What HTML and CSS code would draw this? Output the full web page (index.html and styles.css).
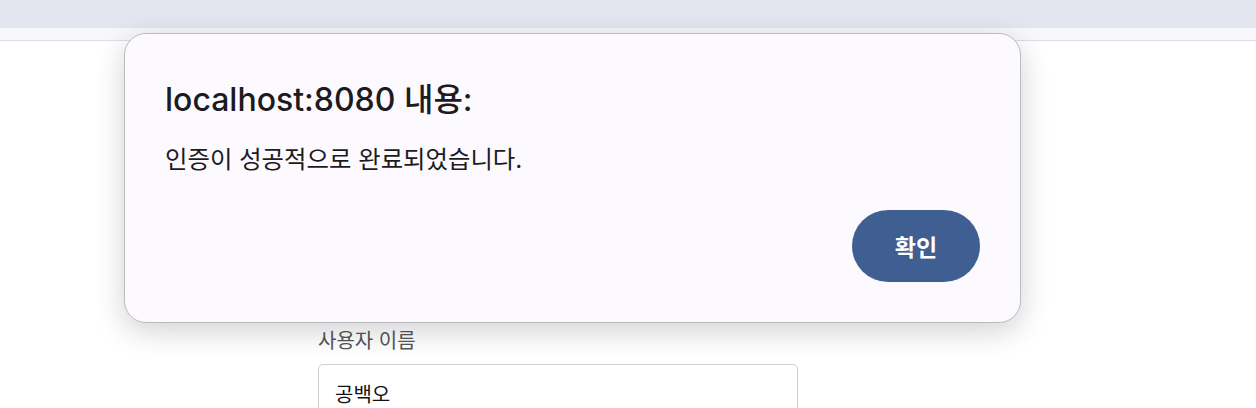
FILE: index.html
```html
<!DOCTYPE html>
<html lang="ko">
<head>
	<meta charset="utf-8">
	<title>회원 정보</title>
	<link rel="stylesheet" href="styles.css">
</head>
<body>
	<div class="topbar"></div>
	<div class="toolbar"></div>
	<div class="page">
		<form class="form">
			<label class="label" for="username">사용자 이름</label>
			<input class="field" id="username" type="text" value="공백오">
		</form>
	</div>

	<div class="alert">
		<div class="alert-title">localhost:8080 내용:</div>
		<div class="alert-msg">인증이 성공적으로 완료되었습니다.</div>
		<div class="alert-actions">
			<button class="alert-ok" type="button">확인</button>
		</div>
	</div>
</body>
</html>
```
FILE: styles.css
```css
html, body {
	margin: 0;
	padding: 0;
	background: #fff;
	font-family: "Inter", "Noto Sans CJK KR", sans-serif;
	height: 408px;
	overflow: hidden;
}
div.topbar {
	height: 28px;
	background: #e3e6ef;
}
div.toolbar {
	height: 12px;
	background: #f8f7fc;
	border-bottom: 1px solid #dcdde6;
}
div.page {
	padding: 287px 0 0 318px;
}
form.form {
	width: 480px;
	display: flex;
	flex-direction: column;
}
label.label {
	font-size: 20px;
	color: #555;
	line-height: 26px;
	margin-bottom: 10px;
}
input.field {
	box-sizing: border-box;
	width: 480px;
	height: 58px;
	border: 1px solid #cfcfcf;
	border-radius: 5px;
	padding: 0 16px;
	font: 20px "Inter", "Noto Sans CJK KR", sans-serif;
	color: #111;
	background: #fff;
}

div.alert {
	position: absolute;
	left: 124px;
	top: 33px;
	width: 897px;
	height: 290px;
	box-sizing: border-box;
	background: #fcfaff;
	border: 1px solid #bdbbc2;
	border-radius: 22px;
	box-shadow: 0 8px 30px rgba(0,0,0,0.18);
	padding: 46px 40px 0 40px;
}
div.alert-title {
	font-size: 32px;
	font-weight: 500;
	color: #1c1b20;
	line-height: 40px;
}
div.alert-msg {
	font-size: 24.4px;
	color: #1c1b20;
	line-height: 34px;
	margin-top: 22px;
}
div.alert-actions {
	display: flex;
	justify-content: flex-end;
	margin-top: 34px;
}
button.alert-ok {
	width: 128px;
	height: 72px;
	border: none;
	border-radius: 36px;
	background: #3f5e91;
	color: #fff;
	font: 600 23px "Inter", "Noto Sans CJK KR", sans-serif;
}
```
